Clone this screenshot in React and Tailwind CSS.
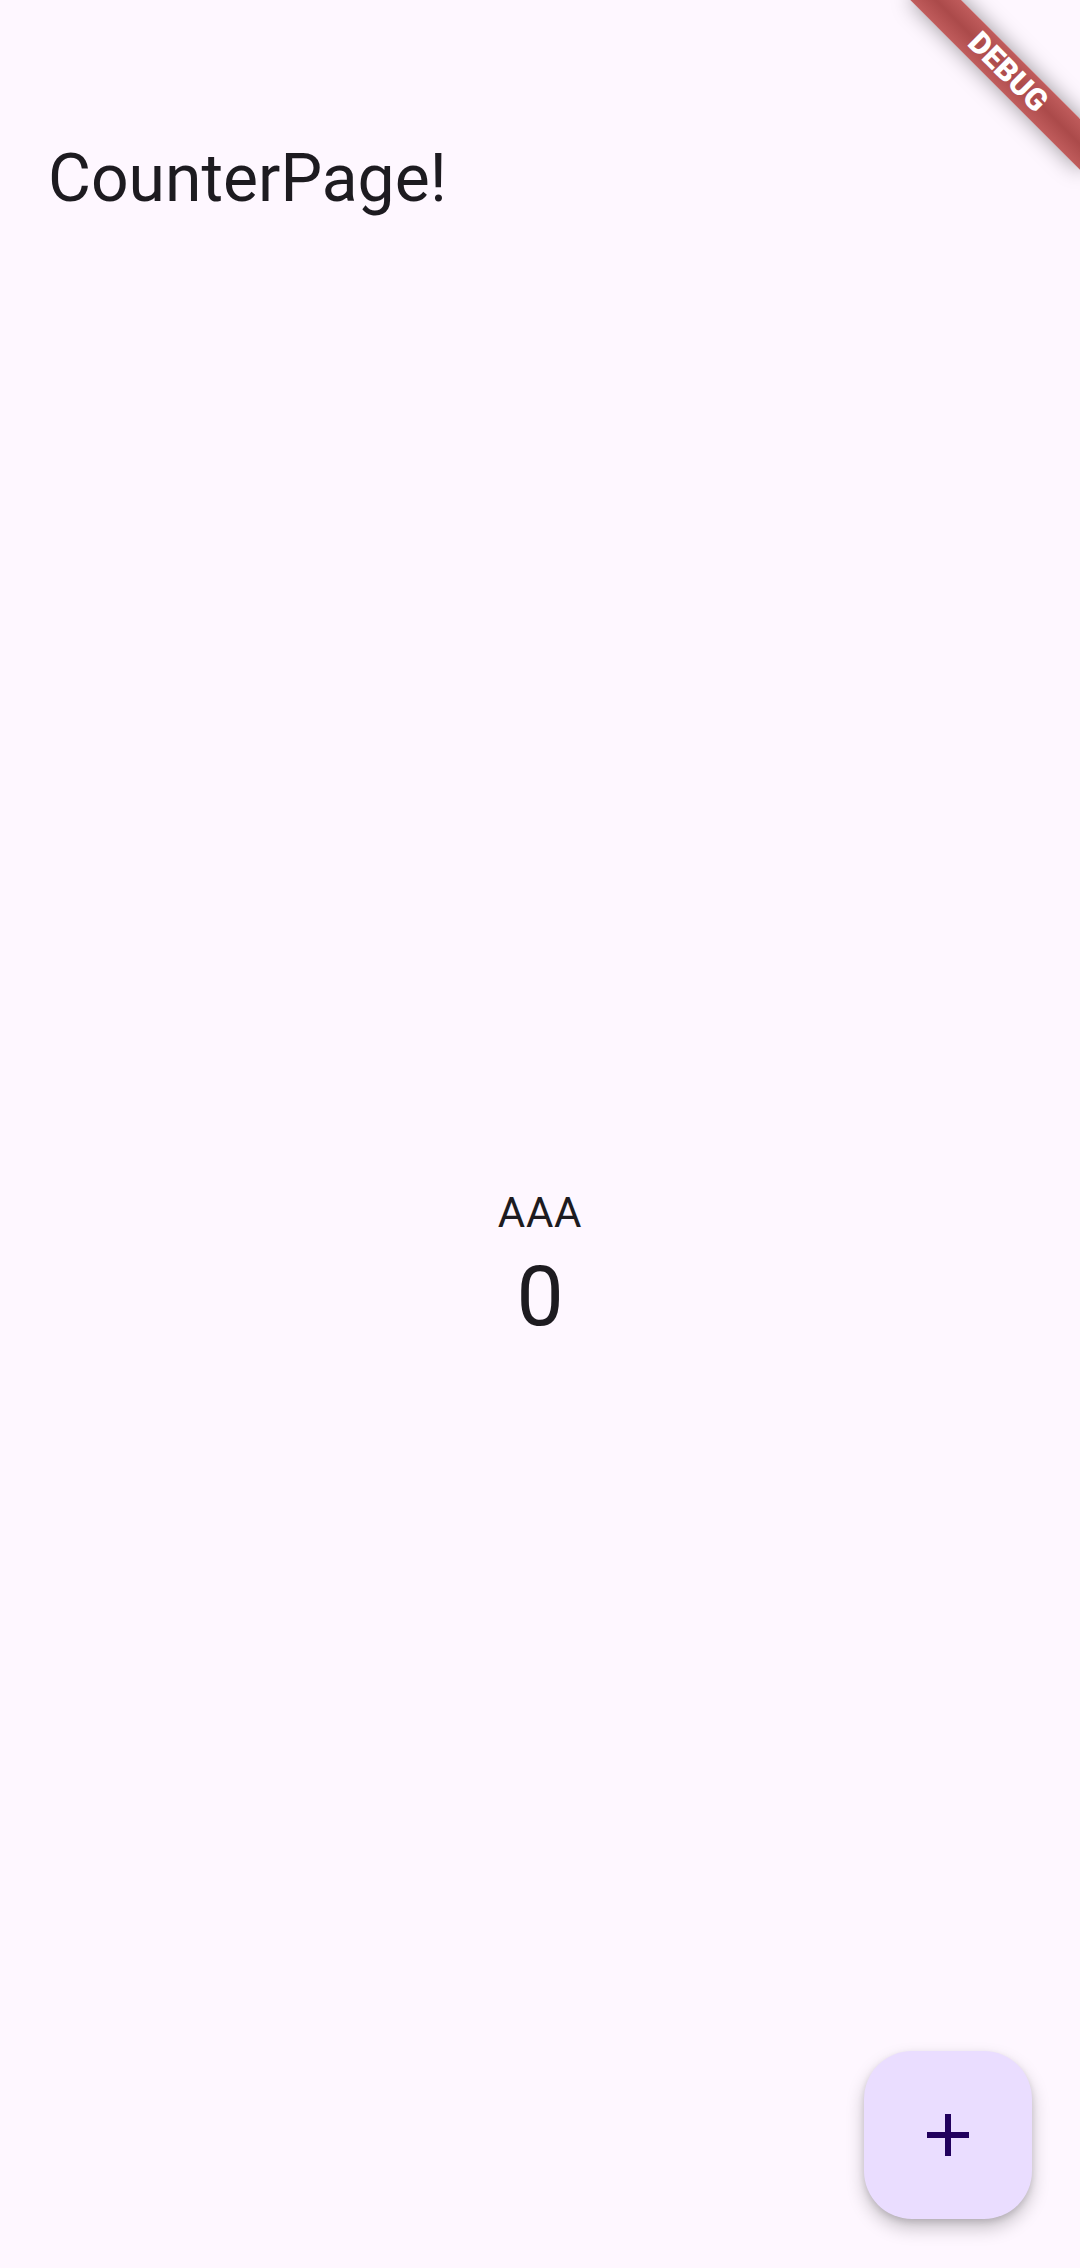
import React, { useState } from "react";

const App = () => {
  const [count, setCount] = useState(0);

  return (
    <div
      className="relative flex flex-col h-[2268px] w-[1080px] overflow-hidden bg-[#fef7ff] text-[#1d1b20]"
      style={{ fontFamily: "Roboto, 'Noto Sans', sans-serif" }}
    >
      {/* status bar space */}
      <div className="h-[83px] shrink-0" />

      {/* app bar */}
      <header className="h-[192px] shrink-0 flex items-center px-[48px]">
        <h1 className="text-[66px] leading-[84px] font-normal">CounterPage!</h1>
      </header>

      {/* body */}
      <main className="flex-1 flex flex-col items-center justify-center pb-[9px]">
        <p className="text-[42px] leading-[60px] tracking-[0.75px]">AAA</p>
        <p className="text-[84px] leading-[108px]">{count}</p>
      </main>

      {/* fab */}
      <button
        type="button"
        onClick={() => setCount(count + 1)}
        className="absolute right-[48px] bottom-[49px] w-[168px] h-[168px] rounded-[48px] bg-[#eaddff] flex items-center justify-center shadow-[0_9px_18px_rgba(0,0,0,0.22),0_3px_6px_rgba(0,0,0,0.12)]"
      >
        <svg width="72" height="72" viewBox="0 0 24 24" fill="#21005d">
          <path d="M19 13h-6v6h-2v-6H5v-2h6V5h2v6h6v2z" />
        </svg>
      </button>

      {/* debug banner */}
      <div className="absolute left-[960px] top-[84px] w-[240px] h-[36px] origin-[120px_-84px] rotate-45 bg-[linear-gradient(to_bottom,#c05c5c,#ab4a4a_50%,#c05c5c)] shadow-[0_0_22px_rgba(0,0,0,0.4)] flex items-center justify-center">
        <span className="text-white text-[30.6px] leading-[30.6px] font-black">DEBUG</span>
      </div>
    </div>
  );
};

export default App;
